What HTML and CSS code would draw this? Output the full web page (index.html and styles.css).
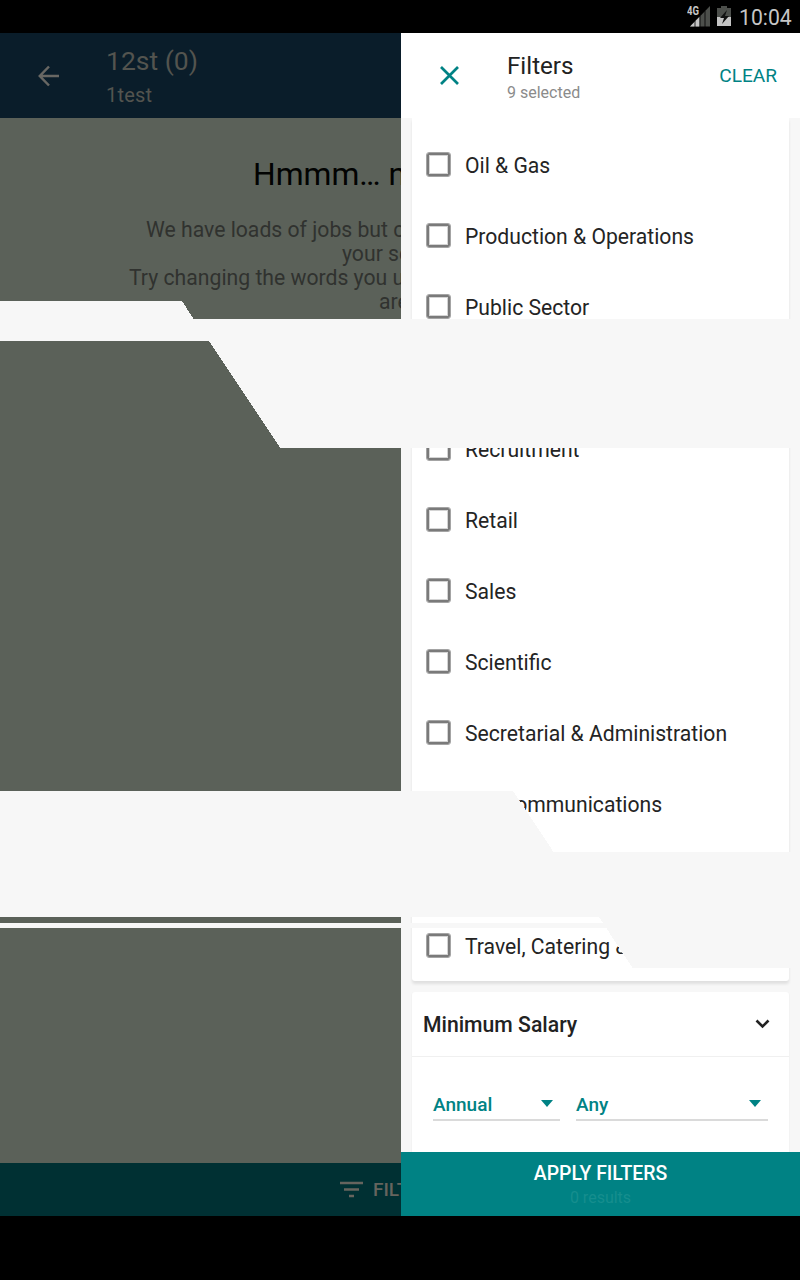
FILE: index.html
```html
<!DOCTYPE html>
<html lang="en">
<head>
<meta charset="utf-8">
<title>Filters</title>
<link rel="stylesheet" href="styles.css">
</head>
<body>
<div class="screen">
  <div class="status">
    <svg class="signal" width="24" height="22" viewBox="0 0 24 22"><path d="M3 21.500 23 1v20.500z" fill="#4c4f4b"/><path d="M3 21.500 12.500 11.800v9.700z" fill="#c6c6c6"/><path d="M8 16v6M13 11v11M18 6v16" stroke="#000" stroke-width=".8"/><text x="0" y="10" class="net" textLength="12" lengthAdjust="spacingAndGlyphs">4G</text></svg>
    <svg class="battery" width="14" height="22" viewBox="0 0 14 22"><path d="M0 3h4V1h6v2h4v9H0z" fill="#4c4f4b"/><path d="M0 12h14v9H0z" fill="#c4c4c4"/><path d="M10 5 3 13h4l-2 6 7-8H8z" fill="#111"/></svg>
    <span class="clock">10:04</span>
  </div>
  <div class="main">
    <div class="page">
      <header class="topbar">
        <svg class="back" width="22" height="22" viewBox="0 0 22 22"><path d="M21 11H2M11 1.500 1.800 11l9.200 9.500" fill="none" stroke="#686763" stroke-width="2.500"/></svg>
        <div class="titles"><div class="title">12st (0)</div><div class="sub">1test</div></div>
      </header>
      <div class="empty">
        <div class="hmm">Hmmm… n</div>
        <div class="l1">We have loads of jobs but c</div>
        <div class="l2">your se</div>
        <div class="l3">Try changing the words you u</div>
        <div class="l4">are</div>
      </div>
      <div class="filterbar">
        <svg class="ficon" width="24" height="18" viewBox="0 0 24 18"><path d="M1 2h23M5 8.500h15M10 15h5" stroke="#66645e" stroke-width="2.300"/></svg>
        <span>FILT</span>
      </div>
    </div>
    <aside class="drawer">
      <header class="dhead">
        <svg class="close" width="19" height="19" viewBox="0 0 19 19"><path d="M1 1 18 18M18 1 1 18" stroke="#008284" stroke-width="2.700"/></svg>
        <div class="dtitles"><div class="dtitle">Filters</div><div class="dsub">9 selected</div></div>
        <span class="clear">CLEAR</span>
      </header>
      <div class="list">
        <div class="card options">
          <div class="row"><i class="box"></i><span>Oil &amp; Gas</span></div>
          <div class="row"><i class="box"></i><span>Production &amp; Operations</span></div>
          <div class="row"><i class="box"></i><span>Public Sector</span></div>
          <div class="row"></div>
          <div class="row"><i class="box"></i><span>Recruitment</span></div>
          <div class="row"><i class="box"></i><span>Retail</span></div>
          <div class="row"><i class="box"></i><span>Sales</span></div>
          <div class="row"><i class="box"></i><span>Scientific</span></div>
          <div class="row"><i class="box"></i><span>Secretarial &amp; Administration</span></div>
          <div class="row"><i class="box"></i><span>Telecommunications</span></div>
          <div class="row"></div>
          <div class="row"><i class="box"></i><span>Travel, Catering &amp;</span></div>
        </div>
        <div class="card salary">
          <div class="shead"><span>Minimum Salary</span><svg width="15" height="10" viewBox="0 0 15 10"><path d="m1.500 1.500 6 6 6-6" fill="none" stroke="#222" stroke-width="2.600"/></svg></div>
          <div class="selects">
            <div class="select annual"><span>Annual</span><i class="tri"></i></div>
            <div class="select any"><span>Any</span><i class="tri"></i></div>
          </div>
        </div>
      </div>
      <div class="apply"><div class="atext">APPLY FILTERS</div><div class="ares">0 results</div></div>
    </aside>
    <svg class="bands" width="800" height="1183" viewBox="0 33 800 1183" shape-rendering="crispEdges" fill="#f7f7f7">
      <path d="M0 301H182L193.500 319H800V448H280.500L209 341H0z"/>
      <path d="M0 791H513L553.500 852H800V968H632.500L599 917H0z"/>
      <path d="M0 923H602L607 928H0z"/>
    </svg>
  </div>
  <div class="nav"></div>
</div>
</body>
</html>
```
FILE: styles.css
```css
* { box-sizing: border-box; }
body { margin: 0; background: #000; font-family: Roboto, "Liberation Sans", sans-serif; }
.screen { width: 800px; height: 1280px; display: flex; flex-direction: column; overflow: hidden; }
.status { height: 33px; display: flex; justify-content: flex-end; align-items: flex-start; padding: 5px 8px 0 0; color: #c6c6c6; }
.signal { margin-right: 6px; }
.battery { margin-right: 8px; }
.net { font: bold 12px Roboto, sans-serif; fill: #c6c6c6; stroke: #000; stroke-width: 2px; paint-order: stroke; }
.clock { font-size: 21.200px; line-height: 25px; width: 53px; white-space: nowrap; }
.main { position: relative; height: 1183px; display: flex; }
.page { width: 401px; display: flex; flex-direction: column; overflow: hidden; background: #5b6159; white-space: nowrap; }
.topbar { height: 85px; background: #0a1d2a; display: flex; color: #53544f; flex: none; }
.back { margin: 32px 0 0 38px; }
.titles { margin-left: 46px; padding-top: 11px; }
.title { font-size: 26.500px; line-height: 34px; }
.sub { font-size: 20px; line-height: 34px; letter-spacing: .2px; }
.empty { flex: 1; color: #30322f; font-size: 21.200px; line-height: 24px; }
.hmm { color: #020302; font-size: 31.800px; line-height: 40px; padding: 36px 0 0 253px; margin-bottom: 24px; }
.l1 { padding-left: 146px; }
.l2 { padding-left: 342px; }
.l3 { padding-left: 129px; }
.l4 { padding-left: 379px; }
.filterbar { height: 53px; background: #003033; display: flex; align-items: center; gap: 10px; padding-left: 339px; color: #66645e; font-size: 19px; font-weight: 500; }
.ficon { flex: none; }
.drawer { width: 399px; display: flex; flex-direction: column; background: #f7f7f7; }
.dhead { height: 85px; flex: none; background: #fff; display: flex; }
.close { margin: 33px 0 0 39px; }
.dtitles { margin-left: 48px; padding-top: 17px; }
.dtitle { font-size: 24.200px; line-height: 32px; color: #222; }
.dsub { font-size: 16px; line-height: 22px; color: #8b8b8b; }
.clear { margin: 30px 23px 0 auto; font-size: 19.100px; line-height: 25px; color: #008284; }
.list { height: 1034px; padding: 0 11px; overflow: hidden; }
.card { background: #fff; box-shadow: 0 1px 2px #00000012; }
.options { height: 863px; padding-top: 11px; border-radius: 0 0 3px 3px; margin-bottom: 11px; box-shadow: 0 3px 3px #00000018; }
.row { height: 71px; display: flex; align-items: center; padding-left: 14px; gap: 14px; font-size: 21.150px; color: #242424; white-space: nowrap; }
.row span { padding-top: 2px; }
.box { width: 25px; height: 25px; flex: none; border: 1px solid #a4a4a4; border-radius: 3px; box-shadow: inset 0 0 0 2px #7a7a7a, inset 0 0 0 3px #d4d4d4; }
.salary { height: 170px; border-radius: 3px 3px 0 0; }
.shead { height: 65px; border-bottom: 1px solid #f0f0f0; display: flex; justify-content: space-between; align-items: center; padding: 0 19px 0 11px; font-size: 21.200px; font-weight: 500; color: #222; }
.shead span { padding-top: 1px; }
.selects { display: flex; gap: 16px; padding: 34px 21px 0; }
.select { height: 30px; border-bottom: 2px solid #dadada; display: flex; justify-content: space-between; align-items: center; color: #008284; font-size: 19px; font-weight: 500; padding: 0 7px 3px 0; }
.select span { padding-top: 2px; }
.annual { width: 127px; }
.any { width: 192px; }
.tri { border: 6.500px solid transparent; border-top: 7px solid #008284; border-bottom: 0; }
.apply { height: 64px; background: #008284; text-align: center; color: #fff; padding-top: 9px; }
.atext { font-size: 19.400px; line-height: 25px; font-weight: 500; }
.ares { font-size: 16px; line-height: 24px; color: #168e8e; }
.bands { position: absolute; left: 0; top: 0; }
.nav { height: 64px; background: #000; }
```
